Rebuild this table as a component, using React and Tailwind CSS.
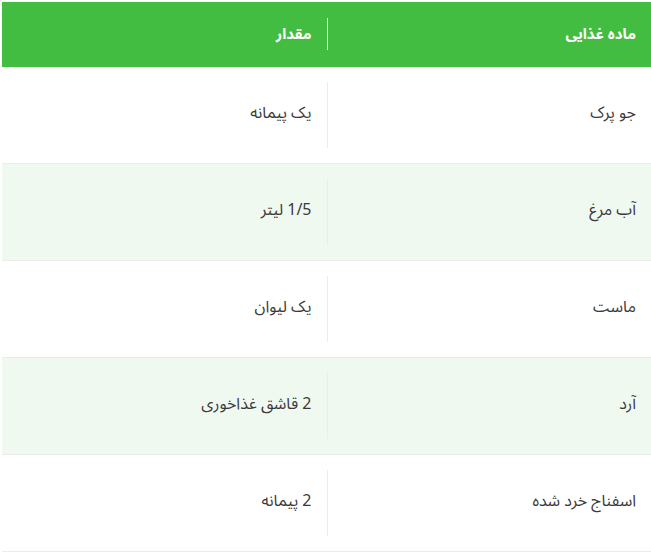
const rows = [
  ["جو پرک", "یک پیمانه"],
  ["آب مرغ", "1/5 لیتر"],
  ["ماست", "یک لیوان"],
  ["آرد", "2 قاشق غذاخوری"],
  ["اسفناج خرد شده", "2 پیمانه"],
];

export default function App() {
  return (
    <div
      dir="rtl"
      className="pt-[2px] pl-[2px] bg-white"
      style={{ fontFamily: '"Noto Sans Arabic", "Noto Sans", "DejaVu Sans", sans-serif' }}
    >
      <div className="grid grid-cols-2 bg-[#42bd41] pt-4 pb-[17px] text-white font-bold text-[15px]">
        <div className="h-8 flex items-center px-[15px] border-l border-white">ماده غذایی</div>
        <div className="h-8 flex items-center px-[15px]">مقدار</div>
      </div>
      {rows.map((r, i) => (
        <div
          key={i}
          className={
            "grid grid-cols-2 py-[15px] border-b border-[#ebebeb] text-[16px] text-[#3a3a3a] " +
            (i % 2 === 1 ? "bg-[#f0f9f0]" : "bg-white")
          }
        >
          <div className="h-[66px] flex items-center px-[15px] pb-1 border-l border-[#ececec]">{r[0]}</div>
          <div className="h-[66px] flex items-center px-[15px] pb-1">{r[1]}</div>
        </div>
      ))}
    </div>
  );
}
